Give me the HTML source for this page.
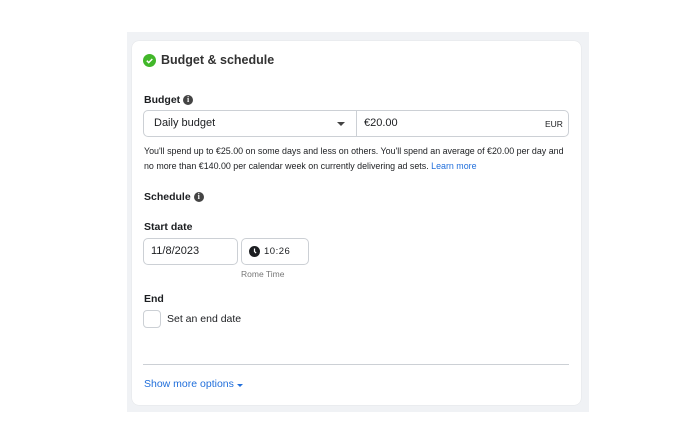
<!DOCTYPE html>
<html><head><style>
*{box-sizing:border-box;margin:0;padding:0}
body{width:688px;height:422px;background:#fff;font-family:"Liberation Sans",Arial,sans-serif;color:#1c1e21;position:relative;overflow:hidden}
.gray{position:absolute;left:127px;top:32px;width:462px;height:380px;background:#f0f2f5}
.card{position:absolute;left:132px;top:41px;width:449px;height:364px;background:#fff;border-radius:7px;box-shadow:0 0 1px rgba(0,0,0,.15)}
.a{position:absolute}
.lbl{font-size:10.5px;font-weight:bold;color:#1c1e21}
.box{position:absolute;border:1px solid #ccd0d5;border-radius:5px;background:#fff}
.info{display:inline-block;width:10px;height:10px;border-radius:50%;background:#444;color:#fff;font-size:8px;line-height:10px;text-align:center;font-weight:bold;font-family:"Liberation Serif",serif;vertical-align:1px;margin-left:3px}
</style></head><body>
<div class="gray"></div>
<div class="card"></div>
<svg class="a" style="left:143px;top:54px" width="13" height="13"><circle cx="6.5" cy="6.5" r="6.5" fill="#42b72a"/><path d="M3.8 6.7l1.9 1.9 3.6-3.6" stroke="#fff" stroke-width="1.5" fill="none"/></svg>
<div class="a" style="left:161px;top:53px;font-size:12.5px;font-weight:bold;color:#333">Budget &amp; schedule</div>
<div class="a lbl" style="left:144px;top:94px">Budget<span class="info">i</span></div>
<div class="box" style="left:143px;top:110px;width:426px;height:27px"></div>
<div class="a" style="left:356px;top:110px;width:1px;height:27px;background:#ccd0d5"></div>
<div class="a" style="left:154px;top:117px;font-size:11px">Daily budget</div>
<div class="a" style="left:337px;top:122px;width:0;height:0;border-left:4px solid transparent;border-right:4px solid transparent;border-top:4px solid #444"></div>
<div class="a" style="left:364px;top:117px;font-size:11px">€20.00</div>
<div class="a" style="left:545px;top:119px;font-size:8.5px">EUR</div>
<div class="a" style="left:144px;top:144px;font-size:8.9px;line-height:15px;width:430px">You'll spend up to €25.00 on some days and less on others. You'll spend an average of €20.00 per day and no more than €140.00 per calendar week on currently delivering ad sets. <span style="color:#216fdb">Learn more</span></div>
<div class="a lbl" style="left:144px;top:191px">Schedule<span class="info">i</span></div>
<div class="a lbl" style="left:144px;top:221px">Start date</div>
<div class="box" style="left:143px;top:238px;width:95px;height:27px"></div>
<div class="a" style="left:151px;top:245px;font-size:11px">11/8/2023</div>
<div class="box" style="left:241px;top:238px;width:68px;height:27px"></div>
<svg class="a" style="left:249px;top:246px" width="11" height="11"><circle cx="5.5" cy="5.5" r="5.5" fill="#1c1e21"/><path d="M5.5 2.5v3l1.6 1.6" stroke="#fff" stroke-width="1.2" fill="none"/></svg>
<div class="a" style="left:264px;top:246px;font-size:9.5px;letter-spacing:0.5px">10:26</div>
<div class="a" style="left:241px;top:269px;font-size:8.5px;color:#777">Rome Time</div>
<div class="a lbl" style="left:144px;top:293px">End</div>
<div class="box" style="left:143px;top:310px;width:18px;height:18px;border-radius:4px"></div>
<div class="a" style="left:167px;top:313px;font-size:10.5px">Set an end date</div>
<div class="a" style="left:143px;top:364px;width:426px;height:1px;background:#ccd0d5"></div>
<div class="a" style="left:144px;top:378px;font-size:10.5px;color:#216fdb">Show more options</div>
<div class="a" style="left:237px;top:384px;width:0;height:0;border-left:3px solid transparent;border-right:3px solid transparent;border-top:3px solid #216fdb"></div>
</body></html>
